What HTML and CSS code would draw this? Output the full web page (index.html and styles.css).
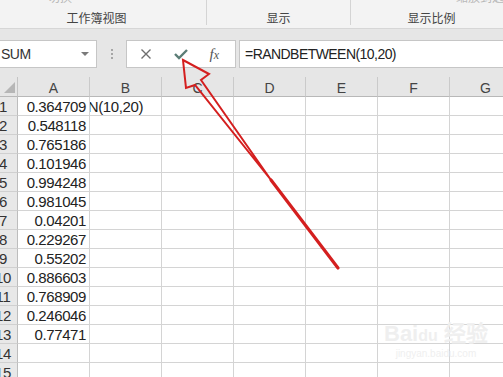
FILE: index.html
```html
<!DOCTYPE html>
<html lang="zh-CN">
<head>
    <meta charset="UTF-8">
    <meta name="viewport" content="width=device-width, initial-scale=1.0">
    <title>RANDBETWEEN</title>
    <link rel="stylesheet" href="styles.css">
</head>
<body>
    <div class="ribbon">
        <div class="group group-view">
            <div class="group-top"><span class="faint faint-left">切换</span></div>
            <div class="group-label">工作簿视图</div>
        </div>
        <div class="group group-show">
            <div class="group-top"></div>
            <div class="group-label">显示</div>
        </div>
        <div class="group group-zoom">
            <div class="group-top"><span class="faint faint-right">缩放到选定区域</span></div>
            <div class="group-label">显示比例</div>
        </div>
    </div>

    <div class="formula-band">
        <div class="name-box">
            <span>SUM</span>
            <span class="drop"></span>
        </div>
        <div class="grip">
            <span></span><span></span><span></span>
        </div>
        <div class="fx-buttons">
            <svg class="btn-icon" width="12" height="12" viewBox="0 0 12 12">
                <path d="M1.5 1.5 L10.5 10.5 M10.5 1.5 L1.5 10.5" stroke="#6e6e6e" stroke-width="1.4" fill="none"/>
            </svg>
            <svg class="btn-icon" width="14" height="12" viewBox="0 0 14 12">
                <path d="M1 6 L5 10 L13 2" stroke="#5b7d76" stroke-width="2.4" fill="none"/>
            </svg>
            <span class="fx">f<i>x</i></span>
        </div>
        <div class="formula-input">=RANDBETWEEN(10,20)</div>
    </div>

    <div class="sheet">
        <div class="corner"><span class="corner-tri"></span></div>
        <div class="col-head">A</div>
        <div class="col-head">B</div>
        <div class="col-head">C</div>
        <div class="col-head">D</div>
        <div class="col-head">E</div>
        <div class="col-head">F</div>
        <div class="col-head">G</div>

        <div class="row-head">1</div><div class="cell num">0.364709</div><div class="cell editing"><span>N(10,20)</span></div><div class="cell"></div><div class="cell"></div><div class="cell"></div><div class="cell"></div><div class="cell"></div>
        <div class="row-head">2</div><div class="cell num">0.548118</div><div class="cell"></div><div class="cell"></div><div class="cell"></div><div class="cell"></div><div class="cell"></div><div class="cell"></div>
        <div class="row-head">3</div><div class="cell num">0.765186</div><div class="cell"></div><div class="cell"></div><div class="cell"></div><div class="cell"></div><div class="cell"></div><div class="cell"></div>
        <div class="row-head">4</div><div class="cell num">0.101946</div><div class="cell"></div><div class="cell"></div><div class="cell"></div><div class="cell"></div><div class="cell"></div><div class="cell"></div>
        <div class="row-head">5</div><div class="cell num">0.994248</div><div class="cell"></div><div class="cell"></div><div class="cell"></div><div class="cell"></div><div class="cell"></div><div class="cell"></div>
        <div class="row-head">6</div><div class="cell num">0.981045</div><div class="cell"></div><div class="cell"></div><div class="cell"></div><div class="cell"></div><div class="cell"></div><div class="cell"></div>
        <div class="row-head">7</div><div class="cell num">0.04201</div><div class="cell"></div><div class="cell"></div><div class="cell"></div><div class="cell"></div><div class="cell"></div><div class="cell"></div>
        <div class="row-head">8</div><div class="cell num">0.229267</div><div class="cell"></div><div class="cell"></div><div class="cell"></div><div class="cell"></div><div class="cell"></div><div class="cell"></div>
        <div class="row-head">9</div><div class="cell num">0.55202</div><div class="cell"></div><div class="cell"></div><div class="cell"></div><div class="cell"></div><div class="cell"></div><div class="cell"></div>
        <div class="row-head">10</div><div class="cell num">0.886603</div><div class="cell"></div><div class="cell"></div><div class="cell"></div><div class="cell"></div><div class="cell"></div><div class="cell"></div>
        <div class="row-head">11</div><div class="cell num">0.768909</div><div class="cell"></div><div class="cell"></div><div class="cell"></div><div class="cell"></div><div class="cell"></div><div class="cell"></div>
        <div class="row-head">12</div><div class="cell num">0.246046</div><div class="cell"></div><div class="cell"></div><div class="cell"></div><div class="cell"></div><div class="cell"></div><div class="cell"></div>
        <div class="row-head">13</div><div class="cell num">0.77471</div><div class="cell"></div><div class="cell"></div><div class="cell"></div><div class="cell"></div><div class="cell"></div><div class="cell"></div>
        <div class="row-head">14</div><div class="cell"></div><div class="cell"></div><div class="cell"></div><div class="cell"></div><div class="cell"></div><div class="cell"></div><div class="cell"></div>
        <div class="row-head">15</div><div class="cell"></div><div class="cell"></div><div class="cell"></div><div class="cell"></div><div class="cell"></div><div class="cell"></div><div class="cell"></div>
    </div>

    <!-- watermark and annotation arrow sit over the sheet -->
    <div class="watermark">
        <div class="wm-logo">Bai<span>du</span> 经验</div>
        <div class="wm-url">jingyan.baidu.com</div>
    </div>

    <svg class="arrow" width="503" height="377" viewBox="0 0 503 377">
        <polygon points="183,60 209,74 201,80 271,180 195,85 186,88" fill="none" stroke="#d41f1f" stroke-width="2" stroke-linejoin="miter"/>
        <path d="M271 180 L338 268" stroke="#d41f1f" stroke-width="3.2" stroke-linecap="round"/>
    </svg>
</body>
</html>
```

FILE: styles.css
```css
body {
    margin: 0;
    width: 503px;
    height: 377px;
    overflow: hidden;
    position: relative;
    background: #ffffff;
    font-family: "Liberation Sans", Arial, sans-serif;
    color: #222;
}

/* ribbon strip (bottom of the view tab) */
.ribbon {
    display: flex;
    height: 28px;
    background: #f3f3f3;
    border-bottom: 1px solid #d6d6d6;
    overflow: hidden;
}

.group {
    flex: none;
    height: 25px;
    box-sizing: border-box;
    border-right: 1px solid #d4d4d4;
}

.group-view {
    width: 207px;
}

.group-show {
    width: 144px;
}

.group-zoom {
    width: 161px;
    border-right: none;
}

.group-top {
    height: 4px;
    overflow: hidden;
    position: relative;
}

.faint {
    position: absolute;
    top: -10px;
    font-family: "Noto Sans CJK SC", sans-serif;
    font-size: 12px;
    line-height: 14px;
    color: #b8b8b8;
    white-space: nowrap;
}

.faint-left {
    left: 48px;
}

.faint-right {
    left: 105px;
}

.group-label {
    padding-top: 6px;
    font-family: "Noto Sans CJK SC", sans-serif;
    font-size: 12px;
    line-height: 16px;
    color: #444;
    text-align: center;
}

.group-view .group-label {
    padding-right: 13px;
}

/* formula bar */
.formula-band {
    display: flex;
    background: #e6e6e6;
    padding: 11px 0 9px 0;
}

.name-box {
    flex: none;
    width: 100px;
    height: 28px;
    margin-left: -3px;
    box-sizing: border-box;
    border: 1px solid #c6c6c6;
    background: #fff;
    display: flex;
    align-items: center;
    justify-content: space-between;
    padding: 0 7px 0 3px;
    font-size: 14px;
    letter-spacing: -0.5px;
    color: #333;
}

.drop {
    width: 0;
    height: 0;
    border-left: 4px solid transparent;
    border-right: 4px solid transparent;
    border-top: 4px solid #7a7a7a;
}

.grip {
    flex: none;
    width: 29px;
    display: flex;
    flex-direction: column;
    align-items: center;
    justify-content: center;
    gap: 2px;
}

.grip span {
    width: 2px;
    height: 2px;
    background: #a6a6a6;
}

.fx-buttons {
    flex: none;
    width: 110px;
    height: 28px;
    box-sizing: border-box;
    border: 1px solid #c6c6c6;
    background: #fff;
    display: flex;
    align-items: center;
    justify-content: space-between;
    padding: 0 16px 0 13px;
}

.btn-icon {
    display: block;
}

.fx {
    font-family: "Liberation Serif", serif;
    font-style: italic;
    font-size: 15px;
    color: #555;
}

.fx i {
    font-size: 12px;
}

.formula-input {
    flex: 1;
    height: 28px;
    margin-left: 3px;
    margin-right: -10px;
    box-sizing: border-box;
    border: 1px solid #c6c6c6;
    background: #fff;
    padding-left: 5px;
    font-size: 14px;
    letter-spacing: -0.55px;
    line-height: 26px;
    color: #222;
}

/* worksheet grid */
.sheet {
    display: grid;
    grid-template-columns: 29px repeat(7, 72px);
    grid-template-rows: 20px;
    grid-auto-rows: 19px;
    margin-left: -11px;
}

.corner,
.col-head,
.row-head,
.cell {
    box-sizing: border-box;
    overflow: hidden;
}

.corner {
    position: relative;
    background: #e6e6e6;
    border-right: 1px solid #c4c4c4;
    border-bottom: 1px solid #b8b8b8;
}

.corner-tri {
    position: absolute;
    right: 2px;
    bottom: 3px;
    width: 0;
    height: 0;
    border-left: 11px solid transparent;
    border-bottom: 11px solid #b6b6b6;
}

.col-head {
    background: #e6e6e6;
    border-right: 1px solid #cacaca;
    border-bottom: 1px solid #b8b8b8;
    text-align: center;
    font-size: 14px;
    line-height: 22px;
    color: #444;
}

.row-head {
    background: #e8e8e8;
    border-right: 1px solid #bdbdbd;
    border-bottom: 1px solid #d0d0d0;
    text-align: center;
    font-size: 15px;
    letter-spacing: -0.4px;
    line-height: 20px;
    color: #333;
}

.cell {
    border-right: 1px solid #d4d4d4;
    border-bottom: 1px solid #d4d4d4;
    font-size: 15px;
    letter-spacing: -0.4px;
    line-height: 20px;
    white-space: nowrap;
}

.num {
    text-align: right;
    padding-right: 3px;
}

/* B1 shows the tail of the formula being edited, its first letter clipped */
.editing {
    display: flex;
    justify-content: flex-end;
    padding-right: 18px;
}

/* faint site watermark */
.watermark {
    position: absolute;
    left: 384px;
    top: 322px;
    color: #efefef;
    text-align: center;
}

.wm-logo {
    font-family: "Liberation Sans", sans-serif;
    font-size: 22px;
    font-weight: bold;
    line-height: 24px;
}

.wm-logo span {
    font-size: 16px;
}

.wm-url {
    font-family: "Liberation Sans", sans-serif;
    font-size: 10px;
    line-height: 12px;
}

.arrow {
    position: absolute;
    left: 0;
    top: 0;
    pointer-events: none;
}
```
